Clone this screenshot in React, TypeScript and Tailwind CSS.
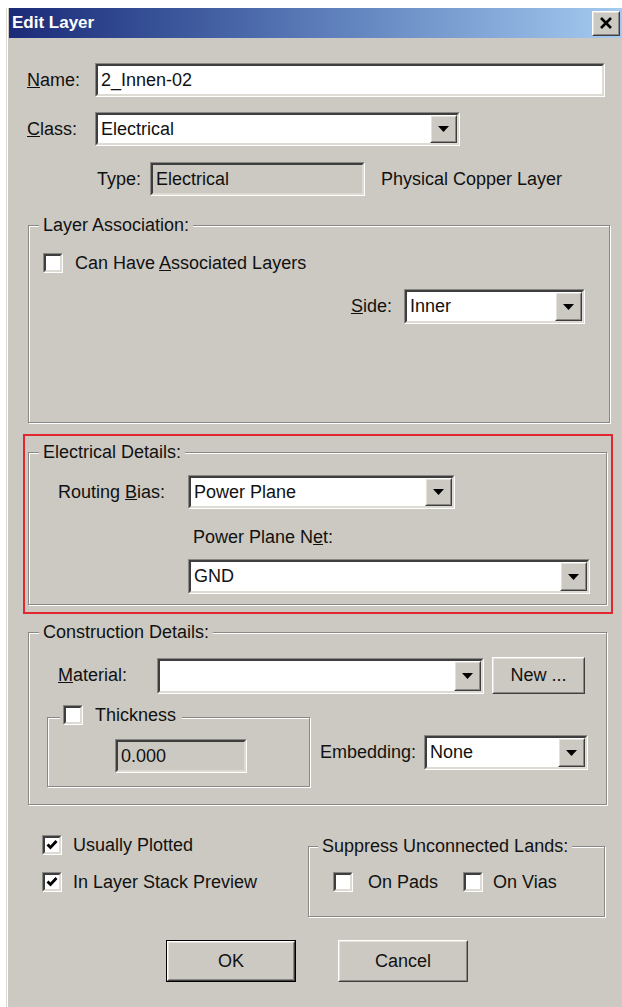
import React from "react";

const face = "bg-[#ccc9c2]";

function Sunken({
  className = "",
  inner = "bg-white",
  children,
}: {
  className?: string;
  inner?: string;
  children?: React.ReactNode;
}) {
  return (
    <div
      className={`border border-t-[#8a8884] border-l-[#8a8884] border-b-white border-r-white ${className}`}
    >
      <div
        className={`flex h-full items-center border-2 border-t-[#3e3e3e] border-l-[#3e3e3e] border-b-[#dedbd5] border-r-[#dedbd5] ${inner}`}
      >
        {children}
      </div>
    </div>
  );
}

function Raised({ className = "", children }: { className?: string; children?: React.ReactNode }) {
  return (
    <div
      className={`border border-t-white border-l-white border-b-[#3e3e3e] border-r-[#3e3e3e] ${face} ${className}`}
    >
      <div className="flex h-full items-center justify-center border border-t-[#e4e1db] border-l-[#e4e1db] border-b-[#8a8884] border-r-[#8a8884]">
        {children}
      </div>
    </div>
  );
}

function Arrow() {
  return (
    <svg width="11" height="6" viewBox="0 0 11 6">
      <path d="M0 0h11L5.5 6z" fill="#000" />
    </svg>
  );
}

function Combo({ value, className = "" }: { value?: string; className?: string }) {
  return (
    <Sunken className={className}>
      <span className="flex-1 truncate pl-[3px]">{value}</span>
      <Raised className="h-full w-[27px]">
        <Arrow />
      </Raised>
    </Sunken>
  );
}

function Check({ checked = false }: { checked?: boolean }) {
  return (
    <Sunken className="h-[20px] w-[20px] shrink-0" inner="bg-white justify-center">
      {checked && (
        <svg width="12" height="12" viewBox="0 0 8 8">
          <path d="M1 3.6 L3 5.6 L7 1.4" stroke="#000" strokeWidth="1.9" fill="none" />
        </svg>
      )}
    </Sunken>
  );
}

function Group({
  legend,
  className = "",
  legendClass = "ml-[10px] px-[4px]",
  children,
}: {
  legend: React.ReactNode;
  className?: string;
  legendClass?: string;
  children?: React.ReactNode;
}) {
  return (
    <fieldset
      className={`border border-[#8a8884] shadow-[inset_1px_1px_0_#fff,1px_1px_0_#fff] ${className}`}
    >
      <legend className={`leading-[22px] ${face} ${legendClass}`}>{legend}</legend>
      {children}
    </fieldset>
  );
}

export default function App() {
  return (
    <div className="min-h-screen overflow-hidden bg-white font-['Liberation_Sans',Arial,sans-serif] text-[18px] text-[#111]">
      <div className="ml-[6px] mt-[8px] w-[616px] border-l border-[#dcd9d3]">
        <div className="border-l border-white">
          <div className="border-l border-[#ccc9c2]">
            {/* title bar */}
            <div className="flex h-[30px] items-center justify-between bg-linear-to-r from-[#1c2a78] via-[#5a7bb8] to-[#a6cbf0] pl-[3px] pr-[2px]">
              <span className="text-[17px] font-bold text-white">Edit Layer</span>
              <Raised className="h-[25px] w-[28px]">
                <svg width="14" height="12" viewBox="0 0 14 12">
                  <path d="M2 1 L12 11 M12 1 L2 11" stroke="#000" strokeWidth="2.6" />
                </svg>
              </Raised>
            </div>

            {/* dialog body */}
            <div className={`h-[969px] pt-[25px] ${face}`}>
              <div className="ml-[18px] flex h-[34px] items-center">
                <span className="w-[68px]">
                  <u>N</u>ame:
                </span>
                <Sunken className="h-[34px] w-[510px]">
                  <span className="pl-[3px]">2_Innen-02</span>
                </Sunken>
              </div>

              <div className="ml-[18px] mt-[15px] flex h-[34px] items-center">
                <span className="w-[68px]">
                  <u>C</u>lass:
                </span>
                <Combo value="Electrical" className="h-[34px] w-[365px]" />
              </div>

              <div className="ml-[88px] mt-[16px] flex h-[34px] items-center">
                <span className="w-[53px]">Type:</span>
                <Sunken className="h-[34px] w-[215px]" inner={face}>
                  <span className="pl-[3px]">Electrical</span>
                </Sunken>
                <span className="ml-[16px]">Physical Copper Layer</span>
              </div>

              <Group legend="Layer Association:" className="ml-[19px] mt-[18px] h-[209px] w-[582px]">
                <div className="ml-[14px] mt-[16px] flex h-[22px] items-center gap-[12px]">
                  <Check />
                  <span>
                    Can Have <u>A</u>ssociated Layers
                  </span>
                </div>
                <div className="mt-[15px] flex items-center justify-end pr-[24px]">
                  <span>
                    <u>S</u>ide:
                  </span>
                  <Combo value="Inner" className="ml-[12px] h-[35px] w-[181px]" />
                </div>
              </Group>

              <div className="ml-[14px] mt-[11px] h-[180px] w-[590px] border-2 border-[#e3262f] pl-[3px] pt-[5px]">
                <Group legend="Electrical Details:" className="h-[164px] w-[579px]">
                  <div className="ml-[29px] mt-[12px] flex items-center">
                    <span className="w-[130px]">
                      Routing <u>B</u>ias:
                    </span>
                    <Combo value="Power Plane" className="h-[34px] w-[267px]" />
                  </div>
                  <div className="ml-[164px] mt-[17px] leading-[22px]">
                    Power Plane N<u>e</u>t:
                  </div>
                  <Combo value="GND" className="ml-[159px] mt-[11px] h-[35px] w-[402px]" />
                </Group>
              </div>

              <Group legend="Construction Details:" className="ml-[19px] mt-[7px] h-[184px] w-[579px]">
                <div className="ml-[29px] mt-[14px] flex items-center">
                  <span className="w-[99px]">
                    <u>M</u>aterial:
                  </span>
                  <Combo className="h-[36px] w-[327px]" />
                  <Raised className="ml-[8px] h-[37px] w-[93px]">New ...</Raised>
                </div>
                <div className="ml-[18px] mt-[10px] flex items-start">
                  <Group
                    legend={
                      <span className="inline-flex items-center gap-[12px]">
                        <Check />
                        Thickness
                      </span>
                    }
                    legendClass="ml-[12px] pl-[3px] pr-[6px]"
                    className="h-[83px] w-[263px]"
                  >
                    <Sunken className="ml-[67px] mt-[9px] h-[34px] w-[132px]" inner={face}>
                      <span className="pl-[3px]">0.000</span>
                    </Sunken>
                  </Group>
                  <div className="ml-[10px] mt-[31px] flex items-center">
                    <span className="w-[104px]">Embedding:</span>
                    <Combo value="None" className="h-[35px] w-[164px]" />
                  </div>
                </div>
              </Group>

              <div className="mt-[29px] flex">
                <div className="ml-[33px] flex w-[266px] flex-col gap-[15px]">
                  <div className="flex h-[22px] items-center gap-[11px]">
                    <Check checked />
                    <span>Usually Plotted</span>
                  </div>
                  <div className="flex h-[22px] items-center gap-[11px]">
                    <Check checked />
                    <span>In Layer Stack Preview</span>
                  </div>
                </div>
                <Group
                  legend="Suppress Unconnected Lands:"
                  legendClass="ml-[9px] px-[4px]"
                  className="mt-[1px] h-[82px] w-[297px]"
                >
                  <div className="ml-[24px] mt-[14px] flex h-[22px] items-center">
                    <Check />
                    <span className="ml-[15px]">On Pads</span>
                    <span className="ml-[25px]">
                      <Check />
                    </span>
                    <span className="ml-[10px]">On Vias</span>
                  </div>
                </Group>
              </div>

              <div className="ml-[157px] mt-[23px] flex gap-[42px]">
                <div className="h-[42px] w-[130px] border border-black">
                  <Raised className="h-full w-full">OK</Raised>
                </div>
                <Raised className="h-[42px] w-[130px]">Cancel</Raised>
              </div>
            </div>
          </div>
        </div>
      </div>
    </div>
  );
}
